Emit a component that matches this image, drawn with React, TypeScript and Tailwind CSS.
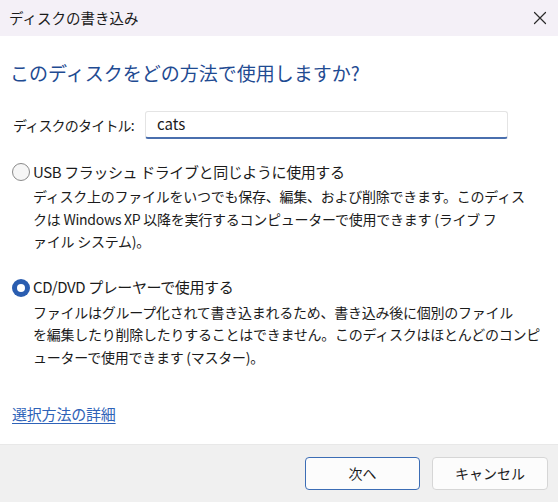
import React from 'react'

const font = {
  fontFamily: '"Noto Sans CJK JP", "Noto Sans", sans-serif',
}

function Radio({ checked }: { checked: boolean }) {
  if (checked) {
    return (
      <span className="w-[18px] h-[18px] rounded-full bg-[#2a5db0] flex items-center justify-center shrink-0">
        <span className="w-[8px] h-[8px] rounded-full bg-white" />
      </span>
    )
  }
  return (
    <span className="w-[18px] h-[18px] rounded-full border border-[#8a8a8a] bg-[#f6f6f6] shrink-0" />
  )
}

function Option({
  checked,
  title,
  lines,
}: {
  checked: boolean
  title: string
  lines: string[]
}) {
  return (
    <div>
      <div className="flex items-center gap-[3px] h-[22px]">
        <Radio checked={checked} />
        <span className="text-[15px] text-[#1b1b1b] tracking-[-0.4px]">{title}</span>
      </div>
      <div className="pl-[21px] mt-[2px] text-[14px] leading-[22.5px] text-[#1b1b1b] tracking-[-0.25px]">
        {lines.map((l, i) => (
          <div key={i} className="whitespace-nowrap">
            {l}
          </div>
        ))}
      </div>
    </div>
  )
}

export default function App() {
  return (
    <div className="w-[558px] h-[502px] flex flex-col bg-white overflow-hidden" style={font}>
      {/* title bar */}
      <div className="h-[36px] bg-[#f4f0f7] flex items-center justify-between pl-[9px] pr-[11px]">
        <span className="text-[14.5px] text-[#1a1a1a]">ディスクの書き込み</span>
        <svg width="14" height="14" viewBox="0 0 14 14" fill="none">
          <path d="M1.5 1.5l11 11M12.5 1.5l-11 11" stroke="#2a2a2a" strokeWidth="1.2" strokeLinecap="round" />
        </svg>
      </div>

      {/* body */}
      <div className="flex-1 px-[12px]">
        <div className="mt-[23px] text-[19px] leading-[28px] text-[#1f4b92] -ml-[2px]">
          このディスクをどの方法で使用しますか?
        </div>

        <div className="mt-[24px] flex items-center">
          <span className="w-[133px] pl-[1px] text-[14px] text-[#1b1b1b] tracking-[-0.8px]">ディスクのタイトル:</span>
          <div className="w-[363px] h-[28px] border border-[#e4e4e4] border-b-2 border-b-[#4a6fae] rounded-[3px] flex items-center pl-[11px] text-[15px] text-[#1b1b1b]">
            cats
          </div>
        </div>

        <div className="mt-[22px]">
          <Option
            checked={false}
            title="USB フラッシュ ドライブと同じように使用する"
            lines={[
              'ディスク上のファイルをいつでも保存、編集、および削除できます。このディス',
              'クは Windows XP 以降を実行するコンピューターで使用できます (ライブ フ',
              'ァイル システム)。',
            ]}
          />
        </div>

        <div className="mt-[24px]">
          <Option
            checked
            title="CD/DVD プレーヤーで使用する"
            lines={[
              'ファイルはグループ化されて書き込まれるため、書き込み後に個別のファイル',
              'を編集したり削除したりすることはできません。このディスクはほとんどのコンピ',
              'ューターで使用できます (マスター)。',
            ]}
          />
        </div>

        <div className="mt-[33px]">
          <a className="text-[15px] text-[#2f63b8] underline underline-offset-[3px] tracking-[-0.2px]">
            選択方法の詳細
          </a>
        </div>
      </div>

      {/* footer */}
      <div className="h-[58px] bg-[#f0f0f0] border-t border-[#e8e8e8] flex items-center justify-end gap-[12px] pr-[10px]">
        <button className="w-[115px] h-[33px] rounded-[4px] border border-[#3c6db5] bg-[#fcfcfc] text-[14px] text-[#1b1b1b]">
          次へ
        </button>
        <button className="w-[116px] h-[33px] rounded-[4px] border border-[#d6d6d6] bg-[#fcfcfc] text-[14px] text-[#1b1b1b]">
          キャンセル
        </button>
      </div>
    </div>
  )
}
